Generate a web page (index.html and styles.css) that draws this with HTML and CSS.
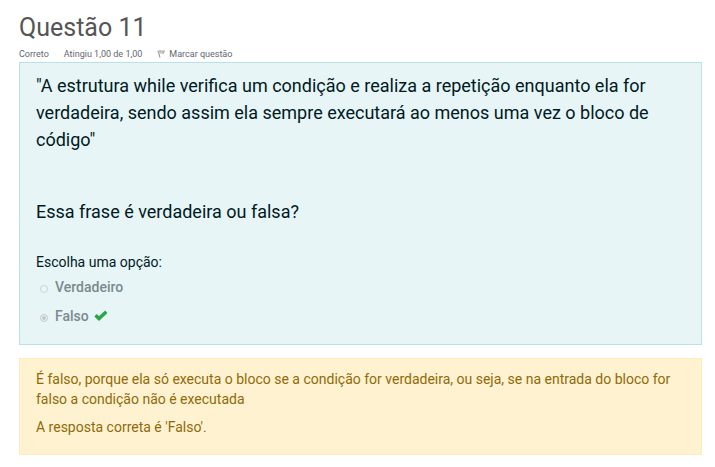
FILE: index.html
```html
<!DOCTYPE html>
<html lang="pt-BR">
<head>
<meta charset="utf-8">
<title>Questão 11</title>
<link rel="stylesheet" href="styles.css">
</head>
<body>
<main class="question">
  <header class="info">
    <h1 class="title">Questão 11</h1>
    <div class="meta">
      <span>Correto</span>
      <span>Atingiu 1,00 de 1,00</span>
      <button type="button" class="flag">
        <svg class="flag-icon" viewBox="0 0 8 8" aria-hidden="true"><path d="M1 1.200 3 7.500" stroke="#888" fill="none"/><path d="M1 1.200Q3 .2 4.500 1 6 1.500 7.500.8L6 4Q4 3 2.200 4.500z" fill="#ccc"/><path d="M.5 1.300Q3 .2 4.500 1 6 1.500 7.500.8L6 3.800" stroke="#999" stroke-width=".8" fill="none"/></svg>
        Marcar questão
      </button>
    </div>
  </header>
  <form class="formulation">
    <p class="text">"A estrutura while verifica um condição e realiza a repetição enquanto ela for verdadeira, sendo assim ela sempre executará ao menos uma vez o bloco de código"</p>
    <p class="text ask">Essa frase é verdadeira ou falsa?</p>
    <fieldset class="answers">
      <legend>Escolha uma opção:</legend>
      <div class="option"><input type="radio" id="true" name="answer" disabled><label for="true">Verdadeiro</label></div>
      <div class="option"><input type="radio" id="false" name="answer" checked disabled><label for="false">Falso</label>
        <svg class="check" viewBox="0 0 14 11" role="img" aria-label="Correto"><path d="M1.500 5.300 5 8.600 12.300 1.700" fill="none" stroke="#28a745" stroke-width="3.400"/></svg></div>
    </fieldset>
  </form>
  <section class="feedback">
    <p>É falso, porque ela só executa o bloco se a condição for verdadeira, ou seja, se na entrada do bloco for falso a condição não é executada</p>
    <p>A resposta correta é 'Falso'.</p>
  </section>
</main>
</body>
</html>
```
FILE: styles.css
```css
* { box-sizing: border-box; }
body { margin: 0; background: #fff; color: #001a1e; font-family: Roboto, sans-serif; font-size: 14px; line-height: 20px; }
p { margin: 0; }
.question { padding: 12px 13px 12px 19px; }
.title { margin: 0; color: #555; font-size: 25px; font-weight: 400; line-height: 32px; }
.meta { display: flex; gap: 15px; padding: 4px 0 2px; color: #5f6871; font-size: 9px; line-height: 12px; }
.flag { display: flex; align-items: center; gap: 4px; padding: 0; border: 0; background: none; color: inherit; font: inherit; }
.flag-icon { width: 8px; height: 8px; }
.formulation { padding: 9px 16px 14px; border: 1px solid #b8e2e8; background: #e7f5f7; }
.text { font-size: 18px; line-height: 27px; }
.ask { margin-top: 45px; }
.answers { margin: 27px 0 0; padding: 0; border: 0; }
.answers legend { padding: 0; }
.option { display: flex; align-items: center; height: 29px; padding-left: 4px; color: #7b8a8d; font-weight: 500; }
.option input { appearance: none; width: 8px; height: 8px; margin: 4px 7px 0 0; border: 1px solid #cbd4d5; border-radius: 50%; background: #edf5f6; }
.option input:checked { background: #c0c8c9; box-shadow: inset 0 0 0 1px #edf5f6; }
.check { width: 14px; height: 11px; margin-left: 5px; }
.feedback { display: grid; gap: 8px; margin-top: 13px; padding: 10px 16px 17px; border: 1px solid #ffeeba; background: #fff2d0; color: #8e6a0a; }
```
